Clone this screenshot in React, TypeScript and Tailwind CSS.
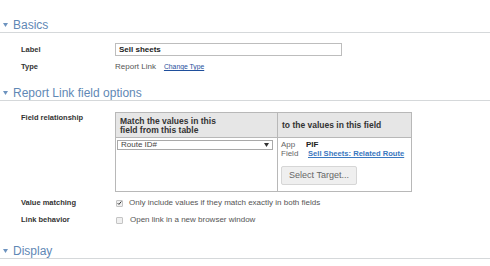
import React from "react";

function SectionHeader({ title }: { title: string }) {
  return (
    <div className="flex h-[15px] items-center border-b border-[#d5d8da] text-[12px] leading-[14px] text-[#5f88b5]">
      <span className="ml-[3px] mr-[5px] flex h-[14px] items-center">
        <svg width="5" height="4" viewBox="0 0 5 4">
          <path d="M0 0 L5 0 L2.5 4 Z" fill="#6d93bf" />
        </svg>
      </span>
      <span>{title}</span>
    </div>
  );
}

function Label({ children, className = "" }: { children: React.ReactNode; className?: string }) {
  return (
    <div className={`w-[115px] shrink-0 pl-[21px] text-[7.5px] font-bold leading-[10px] text-[#333] ${className}`}>
      {children}
    </div>
  );
}

function CheckBox({ checked }: { checked: boolean }) {
  return (
    <div className="flex h-[7px] w-[7px] items-center justify-center rounded-[1px] border border-[#c4c4c4] bg-[#f0f0f0]">
      {checked && (
        <svg width="6" height="6" viewBox="0 0 6 6">
          <path d="M0.8 3.2 L2.3 4.7 L5.2 1.2" stroke="#333" strokeWidth="1.2" fill="none" />
        </svg>
      )}
    </div>
  );
}

export default function App() {
  return (
    <div className="h-[266px] w-[490px] overflow-hidden bg-white pt-[18px] font-['Liberation_Sans',Arial,sans-serif] text-[#555]">
      <SectionHeader title="Basics" />
      <div className="mt-[10px] flex h-[13px] items-center">
        <Label>Label</Label>
        <div className="flex h-[13px] w-[227px] items-center border border-[#bdbdbd] pl-[3px] text-[8px] font-bold text-[#222]">
          Sell sheets
        </div>
      </div>
      <div className="mt-[6px] flex h-[10px] items-center">
        <Label>Type</Label>
        <span className="text-[8px] leading-[10px]">Report Link</span>
        <span className="ml-[8px] text-[6.8px] leading-[10px] text-[#1f4f9c] underline">Change Type</span>
      </div>

      <div className="mt-[14px]">
        <SectionHeader title="Report Link field options" />
      </div>
      <div className="mt-[9px] flex">
        <Label className="pt-[3px]">Field relationship</Label>
        <div className="mt-[2px] grid h-[80px] w-[297px] grid-cols-[162px_1fr] grid-rows-[25px_1fr] border border-[#b8b8b8]">
          <div className="border-b border-r border-[#b8b8b8] bg-[#e6e6e6] pl-[4px] pt-[4px] text-[8.5px] font-bold leading-[9px] text-[#333]">
            Match the values in this
            <br />
            field from this table
          </div>
          <div className="flex items-center border-b border-[#b8b8b8] bg-[#e6e6e6] pl-[4px] text-[8.5px] font-bold leading-[9px] text-[#333]">
            to the values in this field
          </div>
          <div className="border-r border-[#b8b8b8] pl-[1px] pt-[2px]">
            <div className="flex h-[10px] w-[156px] items-center justify-between border border-[#a9a9a9] pl-[3px] pr-[3px] text-[8px] leading-none text-[#444]">
              <span>Route ID#</span>
              <svg width="5" height="4" viewBox="0 0 5 4">
                <path d="M0 0 L5 0 L2.5 4 Z" fill="#333" />
              </svg>
            </div>
          </div>
          <div className="pl-[3px] pt-[2px]">
            <div className="grid grid-cols-[25px_auto] text-[8px] leading-[9px]">
              <span className="text-[#666]">App</span>
              <span className="font-bold text-[#222]">PIF</span>
              <span className="text-[#666]">Field</span>
              <span className="ml-[2px] text-[7.6px] font-bold text-[#3a78c0] underline">Sell Sheets: Related Route</span>
            </div>
            <div className="mt-[8px] flex h-[19px] w-[76px] items-center justify-center rounded-[2px] border border-[#d6d6d6] bg-[#efefef] text-[9px] text-[#666]">
              Select Target...
            </div>
          </div>
        </div>
      </div>

      <div className="mt-[6px] flex h-[10px] items-center">
        <Label>Value matching</Label>
        <div className="ml-[1px] mr-[6px]">
          <CheckBox checked />
        </div>
        <span className="text-[8px] leading-[10px]">Only include values if they match exactly in both fields</span>
      </div>
      <div className="mt-[7px] flex h-[10px] items-center">
        <Label>Link behavior</Label>
        <div className="ml-[1px] mr-[7px]">
          <CheckBox checked={false} />
        </div>
        <span className="text-[8px] leading-[10px]">Open link in a new browser window</span>
      </div>

      <div className="mt-[19px]">
        <SectionHeader title="Display" />
      </div>
    </div>
  );
}
